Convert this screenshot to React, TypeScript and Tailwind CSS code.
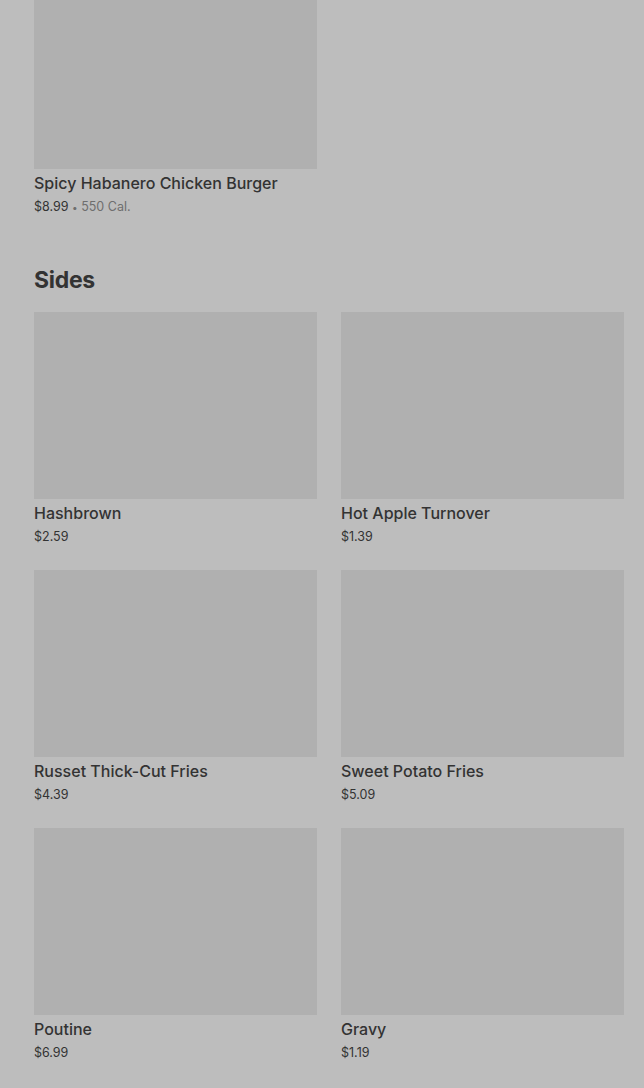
import React from "react";

type Item = { name: string; price: string; cal?: string };

const sides: Item[] = [
  { name: "Hashbrown", price: "$2.59" },
  { name: "Hot Apple Turnover", price: "$1.39" },
  { name: "Russet Thick-Cut Fries", price: "$4.39" },
  { name: "Sweet Potato Fries", price: "$5.09" },
  { name: "Poutine", price: "$6.99" },
  { name: "Gravy", price: "$1.19" },
];

function Card({ item, first }: { item: Item; first?: boolean }) {
  return (
    <div className="flex flex-col">
      <div className={first ? "h-[187px] -mt-[18px] bg-[#b0b0b0]" : "h-[187px] bg-[#b0b0b0]"} />
      <div className="mt-1 text-[16px] leading-[20px] font-medium text-[#333333]">{item.name}</div>
      <div className="mt-[4px] text-[12.5px] leading-[20px] text-[#333333]">
        {item.price}
        {item.cal && (
          <span className="text-[#6e6e6e]">
            {" "}
            <span className="text-[10px]">•</span> {item.cal}
          </span>
        )}
      </div>
    </div>
  );
}

export default function App() {
  return (
    <div
      className="min-h-[1088px] w-full bg-[#bdbdbd] overflow-hidden pl-[34px] pr-[20px]"
      style={{ fontFamily: "Inter, 'Noto Sans', sans-serif" }}
    >
      <div className="grid grid-cols-2 gap-x-6">
        <Card item={{ name: "Spicy Habanero Chicken Burger", price: "$8.99", cal: "550 Cal." }} first />
      </div>
      <h2 className="mt-[47px] text-[23px] leading-[32px] font-bold text-[#333333] tracking-[-0.3px]">Sides</h2>
      <div className="mt-4 grid grid-cols-2 gap-x-6 gap-y-[23px]">
        {sides.map((s) => (
          <Card key={s.name} item={s} />
        ))}
      </div>
    </div>
  );
}
